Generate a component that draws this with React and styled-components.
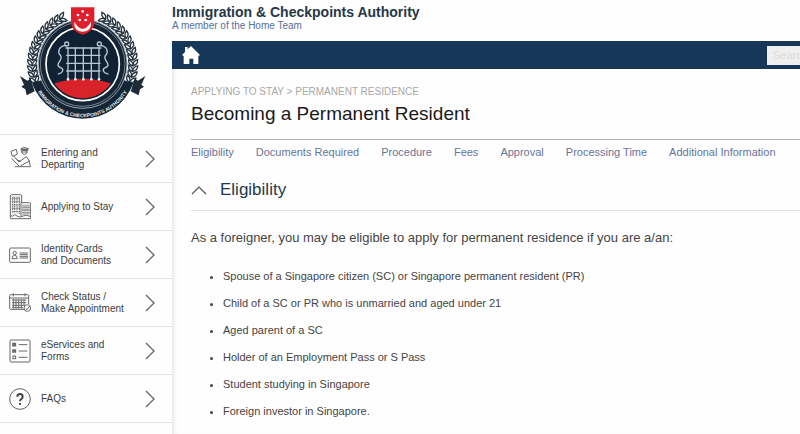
import React from 'react'
import styled, {createGlobalStyle} from 'styled-components'

const menuItems = [
    {label: ['Entering and', 'Departing'], icon: 'officer'},
    {label: ['Applying to Stay'], icon: 'building'},
    {label: ['Identity Cards', 'and Documents'], icon: 'card'},
    {label: ['Check Status /', 'Make Appointment'], icon: 'calendar'},
    {label: ['eServices and', 'Forms'], icon: 'form'},
    {label: ['FAQs'], icon: 'faq'},
]

const tabs = [
    'Eligibility',
    'Documents Required',
    'Procedure',
    'Fees',
    'Approval',
    'Processing Time',
    'Additional Information',
]

const criteria = [
    'Spouse of a Singapore citizen (SC) or Singapore permanent resident (PR)',
    'Child of a SC or PR who is unmarried and aged under 21',
    'Aged parent of a SC',
    'Holder of an Employment Pass or S Pass',
    'Student studying in Singapore',
    'Foreign investor in Singapore.',
]

// one angle per pair of leaves in the wreath
const leafAngles = Array.from({length: 14}, (_, i) => -18 + i * 6.5)

const Wreath = ({flip}) => (
    <g transform={flip ? 'translate(496 0) scale(-1 1)' : undefined}>
        {leafAngles.map((a) => (
            <g key={a} transform={`rotate(${a} 248 192) translate(97 192)`}>
                <path d="M0 9Q-15 7 -14 -9Q0 -5 0 9Z" />
                <path d="M0 9Q14 7 13 -9Q0 -5 0 9Z" />
            </g>
        ))}
    </g>
)

const Crest = () => (
    <CrestSvg viewBox="0 0 516 402" role="img" aria-label="Immigration & Checkpoints Authority crest">
        <g fill="#fff" stroke="#24323f" strokeWidth="4">
            <Wreath />
            <Wreath flip />
        </g>
        <path d="M60 228l22 14 10-6 12 38-24 12-4-18-12-8 8-6z" fill="#1d2a38" />
        <path d="M436 228l-22 14-10-6-12 38 24 12 4-18 12-8-8-6z" fill="#1d2a38" />
        <circle cx="248" cy="192" r="134" fill="#142536" />
        <path d="M96 250A163 166 0 0 0 400 250L370 240A131 131 0 0 1 126 240Z" fill="#142536" />
        <circle cx="248" cy="192" r="133" fill="none" stroke="#dfe5ea" strokeWidth="2" />
        <circle cx="248" cy="192" r="127" fill="none" stroke="#a9b3bd" strokeWidth="2" />
        <circle cx="248" cy="192" r="110" fill="#0f2132" stroke="#fff" strokeWidth="5" />
        <path d="M163 250Q248 222 333 250A103 103 0 0 1 163 250Z" fill="#d8232b" />
        <g fill="none" stroke="#b8c8d6" strokeWidth="4" strokeLinecap="round">
            <path d="M204 144V238M226 144V238M250 144V238M274 144V238M297 144V238" />
            <path d="M198 144H303M200 166H300M200 190H300M200 213H300" />
            <circle cx="200" cy="132" r="6" />
            <circle cx="298" cy="132" r="6" />
            <path d="M194 137C176 140 172 157 181 166S176 184 174 194S192 202 188 212S178 220 175 222" />
            <path d="M304 137C322 140 326 157 317 166S322 184 324 194S306 202 310 212S320 220 324 222" />
        </g>
        <g fill="#fff">
            <circle cx="204" cy="238" r="4" />
            <circle cx="226" cy="238" r="4" />
            <circle cx="250" cy="238" r="4" />
            <circle cx="274" cy="238" r="4" />
            <circle cx="297" cy="238" r="4" />
        </g>
        <path d="M213 22H283V70Q281 95 248 104Q215 95 213 70Z" fill="#e01f2c" />
        <path d="M223 65Q248 108 273 65Q276 94 248 95Q220 94 223 65Z" fill="#fff" />
        <g fill="#fff">
            <circle cx="248" cy="34" r="4" />
            <circle cx="234" cy="45" r="4" />
            <circle cx="262" cy="45" r="4" />
            <circle cx="239" cy="60" r="4" />
            <circle cx="257" cy="60" r="4" />
        </g>
        <path id="motto" d="M101 246A155 155 0 0 0 395 246" fill="none" />
        <CrestText>
            <textPath href="#motto" startOffset="50%" textAnchor="middle">
                IMMIGRATION &amp; CHECKPOINTS AUTHORITY
            </textPath>
        </CrestText>
    </CrestSvg>
)

const icons = {
    officer: (
        <>
            <path d="M6 16L22 10L25 25L10 31ZM14 30L24 42L36 46M24 42L30 48L52 32L61 45L34 60M8 37L18 48L30 60" />
            <path d="M35 9L44 4L58 8L56 14L38 13ZM38 14V20Q45 30 54 21V14M38 18H54M17 62H65M60 44L64 61" />
            <path d="M36 10L57 11" strokeWidth="5" />
        </>
    ),
    building: (
        <>
            <path d="M4 72V6Q4 2 8 2H34Q38 2 38 6V26M36 66V26H62Q65 26 65 30V74H4M4 66H12Q16 58 24 66Q32 72 42 66T65 68" />
            <path d="M11 8V58M17 8V58M24 8V58M31 8V60M42 32V62M48 32V62M54 32V62M60 32V62" strokeDasharray="5 2" />
            <path d="M8 13H34M8 23H34M8 33H34M8 43H34M8 53H34M40 39H62M40 48H62M40 57H62" strokeWidth="2" />
        </>
    ),
    card: (
        <>
            <rect x="2" y="18" width="62" height="43" rx="3" />
            <circle cx="17" cy="33" r="5" />
            <path d="M9 50Q9 40 17 40T25 50ZM32 33H57M32 38H57M32 43H57M32 48H57" />
        </>
    ),
    calendar: (
        <>
            <path d="M46 58H5Q2 58 2 55V17Q2 14 5 14H56Q59 14 59 17V42M2 24H59M13 10V19M48 10V19" />
            <path d="M9 30H52M9 38H52M9 46H48M9 53H42M13 28V55M21 28V55M29 28V55M37 28V55M45 28V48" strokeWidth="3" />
            <circle cx="55" cy="54" r="10" />
            <path d="M50 55L54 59L62 48" />
        </>
    ),
    form: (
        <>
            <rect x="3" y="6" width="60" height="66" rx="3" />
            <path d="M29 20H55M29 39H55M29 58H55" />
            <path d="M12 17H19V23H12ZM12 36H19V42H12Z" strokeWidth="5" />
            <rect x="12" y="54" width="8" height="8" />
        </>
    ),
    faq: (
        <>
            <circle cx="33" cy="39" r="31" />
            <path d="M25 32Q25 24 33 24T41 32Q41 36 37 39T33 46M33 51V56" stroke="#444" strokeWidth="6" />
        </>
    ),
}

const App = () => {
    return (
        <>
            <GlobalStyle />
            <Page>
                <Sidebar>
                    <LogoLink href="#home">
                        <Crest />
                    </LogoLink>
                    <nav aria-label="Services">
                        {menuItems.map(({label, icon}) => (
                            <MenuItem key={icon} href={`#${icon}`}>
                                <MenuIcon viewBox="0 0 66 78" aria-hidden="true">{icons[icon]}</MenuIcon>
                                <MenuLabel>
                                    {label.map((line) => <span key={line}>{line}</span>)}
                                </MenuLabel>
                                <MenuArrow viewBox="0 0 10 18" aria-hidden="true">
                                    <path d="M1 1L9 9L1 17" />
                                </MenuArrow>
                            </MenuItem>
                        ))}
                    </nav>
                </Sidebar>

                <Main>
                    <Header>
                        <SiteName>Immigration &amp; Checkpoints Authority</SiteName>
                        <Tagline href="#team">A member of the Home Team</Tagline>
                    </Header>

                    <NavBar>
                        <HomeLink href="#home" aria-label="Home">
                            <svg viewBox="0 0 54 54" aria-hidden="true">
                                <path d="M0 27L9 18V3H17V10L27 0L54 27L49 30V54H34V38H22V54H5V30Z" />
                            </svg>
                        </HomeLink>
                        <SearchInput type="text" placeholder="Search" aria-label="Search" />
                    </NavBar>

                    <Content>
                        <Breadcrumb>APPLYING TO STAY &gt; PERMANENT RESIDENCE</Breadcrumb>
                        <PageTitle>Becoming a Permanent Resident</PageTitle>
                        <Tabs>
                            {tabs.map((tab) => <Tab key={tab} href="#eligibility">{tab}</Tab>)}
                        </Tabs>
                        <SectionTitle id="eligibility">
                            <SectionToggle type="button">
                                <svg viewBox="0 0 16 9" aria-hidden="true">
                                    <path d="M1 8L8 1L15 8" />
                                </svg>
                                Eligibility
                            </SectionToggle>
                        </SectionTitle>
                        <Intro>
                            As a foreigner, you may be eligible to apply for permanent residence if you are a/an:
                        </Intro>
                        <Criteria>
                            {criteria.map((text) => <li key={text}>{text}</li>)}
                        </Criteria>
                    </Content>
                </Main>
            </Page>
        </>
    )
}

export default App

const GlobalStyle = createGlobalStyle`
    * {
        box-sizing: border-box;
    }
    body {
        margin: 0;
        background: #fefefe;
        color: #444;
        font-family: "Liberation Sans", Arial, sans-serif;
    }
    a {
        text-decoration: none;
    }
`

const Page = styled.div`
    display: flex;
    min-height: 100vh;
`

const Sidebar = styled.aside`
    flex: 0 0 172px;
`

const LogoLink = styled.a`
    display: block;
    border-bottom: 1px solid #e2e2e2;
`

const CrestSvg = styled.svg`
    display: block;
    width: 172px;
    height: 134px;
`

const CrestText = styled.text`
    fill: #e4eaef;
    font-size: 15px;
    font-weight: bold;
`

const MenuItem = styled.a`
    display: flex;
    align-items: center;
    height: 48px;
    padding: 0 17px 0 9px;
    border-bottom: 1px solid #e2e2e2;
    color: #3c3c3c;
`

const MenuIcon = styled.svg`
    width: 22px;
    height: 26px;
    margin-right: 10px;
    fill: none;
    stroke: #686868;
    stroke-width: 3;
`

const MenuLabel = styled.span`
    display: flex;
    flex: 1;
    flex-direction: column;
    font-size: 10px;
    line-height: 12px;
    white-space: nowrap;
`

const MenuArrow = styled.svg`
    width: 10px;
    height: 18px;
    fill: none;
    stroke: #666;
    stroke-width: 1.3;
`

const Main = styled.main`
    display: flex;
    flex: 1;
    flex-direction: column;
    min-width: 0;
`

const Header = styled.header`
    display: flex;
    flex-direction: column;
    height: 41px;
    padding-top: 4px;
`

const SiteName = styled.strong`
    color: #263746;
    font-size: 14px;
    line-height: 16px;
`

const Tagline = styled.a`
    color: #56709c;
    font-size: 10px;
    line-height: 12px;
`

const NavBar = styled.div`
    display: flex;
    align-items: center;
    justify-content: space-between;
    height: 28px;
    padding-left: 10px;
    background: #17375a;
    border: solid #1c3850;
    border-width: 1px 0;
`

const HomeLink = styled.a`
    display: flex;

    svg {
        width: 18px;
        height: 18px;
        fill: #fff;
    }
`

const SearchInput = styled.input`
    width: 33px;
    height: 19px;
    padding: 0 0 0 6px;
    border: none;
    border-radius: 0;
    background: #efefef;
    font-family: inherit;
    font-size: 11px;

    &::placeholder {
        color: #dcdcdc;
        opacity: 1;
    }
`

const Content = styled.div`
    flex: 1;
    padding: 16px 0 0 19px;
    box-shadow: inset 5px 0 5px -4px #dcdce0;
`

const Breadcrumb = styled.div`
    color: #a8a8a8;
    font-size: 10px;
    line-height: 14px;
`

const PageTitle = styled.h1`
    margin: 4px 0 0;
    padding-bottom: 14px;
    border-bottom: 1px solid #b0b0b4;
    color: #1a1a1a;
    font-size: 19px;
    font-weight: normal;
    line-height: 22px;
`

const Tabs = styled.nav`
    display: flex;
    gap: 22px;
    padding-top: 5px;
    white-space: nowrap;
`

const Tab = styled.a`
    color: #66749a;
    font-size: 11px;
    line-height: 14px;
`

const SectionTitle = styled.h2`
    margin: 21px 0 0;
    padding-bottom: 10px;
    border-bottom: 1px solid #dcdfe2;
    font-weight: normal;
`

const SectionToggle = styled.button`
    display: flex;
    align-items: center;
    gap: 13px;
    padding: 0;
    border: none;
    background: none;
    color: #23394c;
    font-family: inherit;
    font-size: 17px;
    line-height: 20px;

    svg {
        width: 16px;
        height: 9px;
        fill: none;
        stroke: #555;
        stroke-width: 1.2;
    }
`

const Intro = styled.p`
    margin: 18px 0 0;
    font-size: 13px;
    line-height: 18px;
`

const Criteria = styled.ul`
    margin: 16px 0 0;
    padding: 0 0 0 32px;
    font-size: 11px;
    line-height: 27px;
`
